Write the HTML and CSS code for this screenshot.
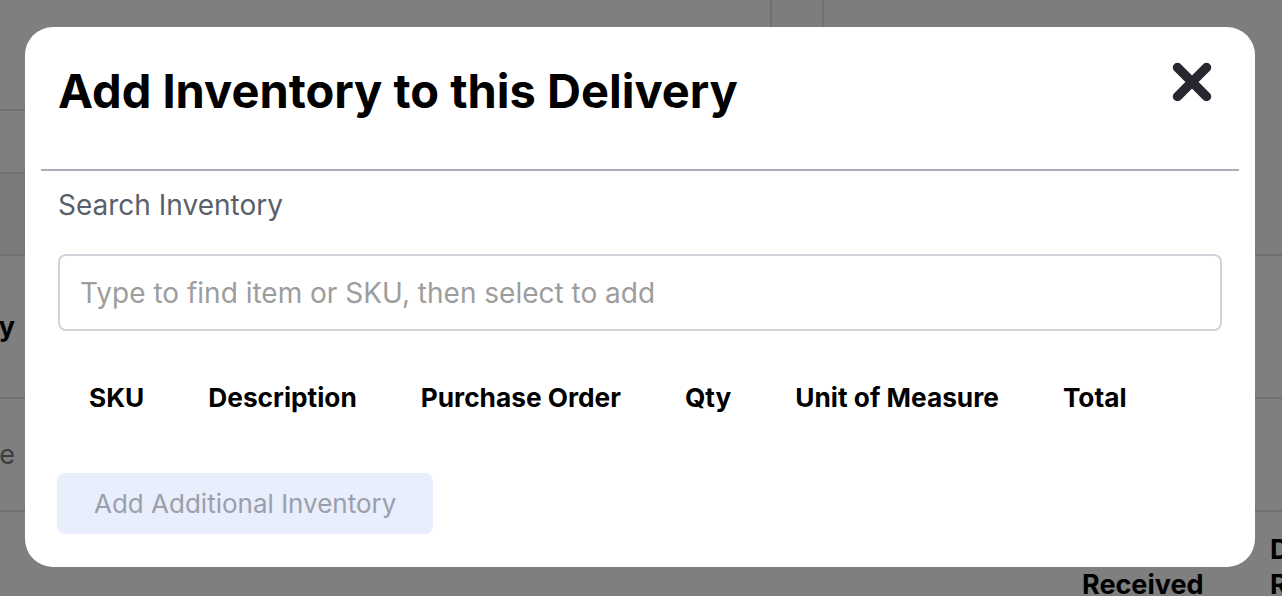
FILE: index.html
```html
<!DOCTYPE html>
<html>
<head>
  <link rel="stylesheet" href="styles.css">
</head>
<body>
  <!-- Page behind the dialog -->
  <div class="page">
    <div class="page-top">
      <div class="top-left">
        <div class="top-row"></div>
        <div class="top-row short"></div>
        <div class="top-row tinted"></div>
      </div>
      <div class="top-col"></div>
      <div class="top-col"></div>
    </div>
    <div class="page-row heading-row">
      <div class="clip-cell"><span class="page-heading">Inventory</span></div>
    </div>
    <div class="page-row note-row">
      <div class="clip-cell"><span class="page-note">Purchase</span></div>
    </div>
    <div class="page-row col-row">
      <div></div>
      <div class="col-head">Qty<br>Received</div>
      <div class="col-head">Date<br>Received</div>
    </div>
  </div>

  <!-- Dialog -->
  <div class="overlay">
    <div class="modal">
      <div class="modal-header">
        <h1 class="modal-title">Add Inventory to this Delivery</h1>
        <button class="close-btn" aria-label="Close">
          <svg width="40" height="40" viewBox="0 0 40 40">
            <path d="M5.5 5.5 L34.5 34.5 M34.5 5.5 L5.5 34.5" stroke="#27272f" stroke-width="9.5" stroke-linecap="round" fill="none"/>
          </svg>
        </button>
      </div>
      <div class="modal-body">
        <label class="search-label" for="search">Search Inventory</label>
        <input class="search-input" id="search" type="text" placeholder="Type to find item or SKU, then select to add">
        <table class="items-table">
          <thead>
            <tr>
              <th>SKU</th>
              <th>Description</th>
              <th>Purchase Order</th>
              <th>Qty</th>
              <th>Unit of Measure</th>
              <th>Total</th>
            </tr>
          </thead>
        </table>
        <button class="add-btn" disabled>Add Additional Inventory</button>
      </div>
    </div>
  </div>
</body>
</html>
```

FILE: styles.css
```css
* {
  margin: 0;
  padding: 0;
  box-sizing: border-box;
}

body {
  font-family: Inter, "Noto Sans", sans-serif;
  background: #fff;
  color: #000;
  overflow: hidden;
}

/* Page behind */
.page {
  width: 1282px;
  height: 596px;
}

.page-top {
  display: grid;
  grid-template-columns: 770px 52px 1fr;
  height: 256px;
  border-bottom: 2px solid #dde3ea;
}

.top-left {
  display: flex;
  flex-direction: column;
}

.top-row {
  height: 111px;
  border-bottom: 2px solid #dde3ea;
}

.top-row.short {
  height: 63px;
}

.top-row.tinted {
  flex: 1;
  border-bottom: none;
  background: #f4f4f4;
}

.top-col {
  background: #f8fbf8;
  border-left: 2px solid #dde3ea;
}

.page-row {
  border-bottom: 2px solid #dde3ea;
  display: flex;
  align-items: center;
}

.heading-row {
  height: 143px;
}

.note-row {
  height: 113px;
}

.clip-cell {
  width: 15px;
  display: flex;
  justify-content: flex-end;
  white-space: nowrap;
}

.page-heading {
  font-size: 27px;
  font-weight: 700;
}

.page-note {
  font-size: 27px;
  color: #7a7a7a;
}

.col-row {
  display: grid;
  grid-template-columns: 1082px 188px 1fr;
  align-items: start;
  border-bottom: none;
  padding-top: 20px;
}

.col-head {
  font-size: 27px;
  font-weight: 700;
  line-height: 35px;
  white-space: nowrap;
}

/* Dialog */
.overlay {
  position: fixed;
  inset: 0;
  background: rgba(0, 0, 0, 0.5);
  display: flex;
  align-items: flex-start;
  padding: 27px 0 0 25px;
}

.modal {
  width: 1230px;
  background: #fff;
  border-radius: 28px;
  padding: 0 16px;
}

.modal-header {
  display: flex;
  justify-content: space-between;
  align-items: flex-start;
  padding: 36px 27px 50px 17px;
  border-bottom: 2px solid #adacb9;
}

.modal-title {
  font-size: 47px;
  font-weight: 700;
  line-height: 56px;
  color: #000;
}

.close-btn {
  background: none;
  border: none;
  cursor: pointer;
  display: block;
  height: 40px;
  margin-top: -1px;
}

.modal-body {
  padding: 15px 17px 33px;
}

.search-label {
  display: block;
  font-size: 28px;
  line-height: 39px;
  color: #5b5f6b;
  margin-bottom: 29px;
}

.search-input {
  display: block;
  width: 100%;
  height: 77px;
  border: 2px solid #cfd3da;
  border-radius: 8px;
  padding: 0 20px;
  font-family: inherit;
  font-size: 28px;
  color: #333;
  outline: none;
}

.search-input::placeholder {
  color: #9d9d9d;
}

.items-table {
  border-collapse: collapse;
  margin-top: 31px;
}

.items-table th {
  font-size: 26.25px;
  font-weight: 700;
  line-height: 39px;
  padding: 16px 32px;
  text-align: left;
  white-space: nowrap;
}

.items-table th:first-child {
  padding-left: 31px;
}

.add-btn {
  display: block;
  margin-top: 40px;
  margin-left: -1px;
  background: #e8eefb;
  color: #9b9eab;
  border: none;
  border-radius: 8px;
  font-family: inherit;
  font-size: 26px;
  line-height: 39px;
  padding: 11px 37px;
}
```
